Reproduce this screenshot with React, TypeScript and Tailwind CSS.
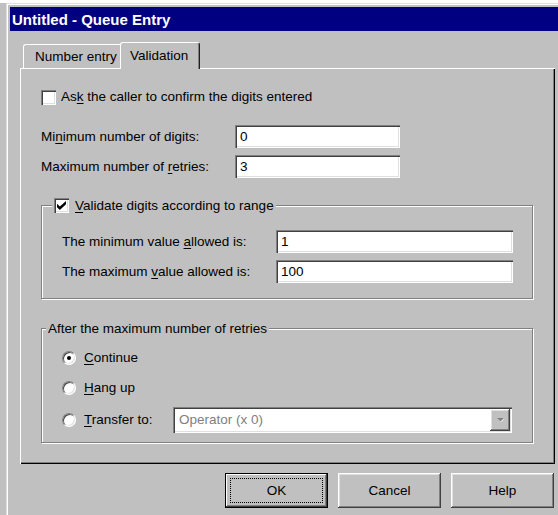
import React from "react";

// classic 3D bevels
const sunken =
  "shadow-[inset_1px_1px_0_#808080,inset_2px_2px_0_#404040,inset_-1px_-1px_0_#fff,inset_-2px_-2px_0_#dfdfdf]";
const raised =
  "shadow-[inset_-1px_-1px_0_#404040,inset_1px_1px_0_#fff,inset_-2px_-2px_0_#808080,inset_2px_2px_0_#dfdfdf]";

function Mn({ children }: { children: React.ReactNode }) {
  return <span className="underline decoration-1 underline-offset-[2px]">{children}</span>;
}

function CheckBox({ checked = false }: { checked?: boolean }) {
  return (
    <span className={`flex h-[15px] w-[15px] shrink-0 items-center justify-center bg-white ${sunken}`}>
      {checked && (
        <svg width="9" height="9" viewBox="0 0 7 7">
          <path d="M0 2.2 L2.2 4.3 L7 0 L7 2.6 L2.2 7 L0 4.8 Z" fill="#000" />
        </svg>
      )}
    </span>
  );
}

function Radio({ checked = false }: { checked?: boolean }) {
  return (
    <span className="flex h-[14px] w-[14px] shrink-0 items-center justify-center rounded-full border border-t-[#808080] border-r-white border-b-white border-l-[#808080] bg-white shadow-[inset_1px_1px_0_#404040,inset_-1px_-1px_0_#dfdfdf]">
      {checked && <span className="h-[4px] w-[4px] rounded-full bg-black" />}
    </span>
  );
}

function Field({ value, className }: { value: string; className: string }) {
  return (
    <div className={`flex h-[23px] items-center bg-white pl-[5px] ${sunken} ${className}`}>{value}</div>
  );
}

export default function App() {
  return (
    <div className="h-[515px] w-[558px] overflow-hidden border-t-[3px] border-white bg-[#c0c0c0] font-['Liberation_Sans',Arial,sans-serif] text-[13.5px] leading-none text-black">
      <div className="ml-[6px] h-[560px] w-[600px] pl-[4px] pt-[4px] shadow-[inset_1px_1px_0_#dfdfdf,inset_2px_2px_0_#fff]">
        <div className="flex h-[24px] items-center bg-[#000080] pl-[2px] text-[15px] font-bold text-white">
          Untitled - Queue Entry
        </div>

        <div className="pl-[10px] pt-[11px]">
          {/* tab strip */}
          <div className="flex h-[26px] items-end pl-[3px]">
            <div className="flex h-[24px] w-[97px] items-center rounded-tl-[3px] border-t border-l border-white pl-[11px]">
              Number entry
            </div>
            <div className="relative z-10 -mb-[1px] flex h-[27px] w-[80px] items-center rounded-t-[3px] border-t border-r border-l border-white border-r-[#202020] bg-[#c0c0c0] pl-[9px] shadow-[inset_-1px_0_0_#808080]">
              Validation
            </div>
          </div>

          {/* tab page */}
          <div className="h-[396px] w-[535px] pt-[19px] pr-[22px] pl-[21px] shadow-[inset_1px_1px_0_#fff,inset_-1px_-1px_0_#000,inset_-2px_-2px_0_#808080]">
            <div className="flex h-[20px] items-center gap-[5px]">
              <CheckBox />
              <span>
                As<Mn>k</Mn> the caller to confirm the digits entered
              </span>
            </div>

            <div className="mt-[18px] flex items-center">
              <span className="w-[194px]">
                Mi<Mn>n</Mn>imum number of digits:
              </span>
              <Field value="0" className="w-[165px]" />
            </div>
            <div className="mt-[7px] flex items-center">
              <span className="w-[194px]">
                Maximum number of <Mn>r</Mn>etries:
              </span>
              <Field value="3" className="w-[165px]" />
            </div>

            {/* range group */}
            <div className="relative mt-[27px] h-[94px] border border-[#808080] pt-[24px] pl-[20px] shadow-[inset_1px_1px_0_#fff,1px_1px_0_#fff]">
              <div className="absolute top-[-9px] left-[10px] flex h-[17px] items-center gap-[6px] bg-[#c0c0c0] px-[2px]">
                <CheckBox checked />
                <span>
                  <Mn>V</Mn>alidate digits according to range
                </span>
              </div>
              <div className="flex items-center">
                <span className="w-[214px]">
                  The minimum value <Mn>a</Mn>llowed is:
                </span>
                <Field value="1" className="w-[237px]" />
              </div>
              <div className="mt-[7px] flex items-center">
                <span className="w-[214px]">
                  The maximum <Mn>v</Mn>alue allowed is:
                </span>
                <Field value="100" className="w-[237px]" />
              </div>
            </div>

            {/* retries group */}
            <div className="relative mt-[29px] h-[115px] border border-[#808080] pt-[19px] pl-[20px] shadow-[inset_1px_1px_0_#fff,1px_1px_0_#fff]">
              <div className="absolute top-[-8px] left-[4px] flex h-[16px] items-center bg-[#c0c0c0] px-[2px]">
                After the maximum number of retries
              </div>
              <div className="flex h-[20px] items-center gap-[8px]">
                <Radio checked />
                <span>
                  <Mn>C</Mn>ontinue
                </span>
              </div>
              <div className="mt-[10px] flex h-[20px] items-center gap-[8px]">
                <Radio />
                <span>
                  <Mn>H</Mn>ang up
                </span>
              </div>
              <div className="mt-[9px] flex h-[26px] items-center gap-[8px]">
                <Radio />
                <span className="w-[81px]">
                  <Mn>T</Mn>ransfer to:
                </span>
                <div className={`flex h-[26px] w-[339px] items-center bg-white pr-[2px] pl-[6px] ${sunken}`}>
                  <span className="flex-1 text-[#808080]">Operator (x 0)</span>
                  <span className={`flex h-[22px] w-[20px] items-center justify-center bg-[#c0c0c0] ${raised}`}>
                    <svg width="9" height="6" viewBox="0 0 9 6">
                      <path d="M1.5 1.5 L8.5 1.5 L5 5 Z" fill="#fff" />
                      <path d="M1 1 L8 1 L4.5 4.5 Z" fill="#808080" />
                    </svg>
                  </span>
                </div>
              </div>
            </div>
          </div>

          {/* dialog buttons */}
          <div className="mt-[9px] flex w-[535px] justify-end gap-[10px] pr-[1px]">
            <button className="flex h-[35px] w-[103px] border border-black bg-[#c0c0c0] p-[4px] shadow-[inset_-1px_-1px_0_#404040,inset_1px_1px_0_#fff,inset_-2px_-2px_0_#808080]">
              <span className="flex flex-1 items-center justify-center border border-dotted border-black">OK</span>
            </button>
            <button className={`flex h-[35px] w-[103px] items-center justify-center bg-[#c0c0c0] ${raised}`}>
              Cancel
            </button>
            <button className={`flex h-[35px] w-[103px] items-center justify-center bg-[#c0c0c0] ${raised}`}>
              Help
            </button>
          </div>
        </div>
      </div>
    </div>
  );
}
